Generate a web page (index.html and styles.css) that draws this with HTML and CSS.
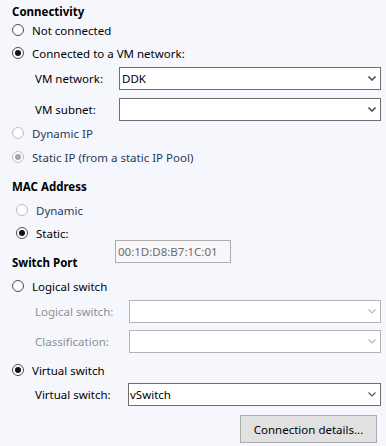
FILE: index.html
```html
<!DOCTYPE html>
<html lang="en">

<head>
    <meta charset="UTF-8">
    <meta name="viewport" content="width=device-width, initial-scale=1.0">
    <link rel="stylesheet" href="styles.css">
    <title>Network Adapter</title>
</head>

<body>
    <div class="panel">
        <!-- Connectivity -->
        <div class="heading heading-first">Connectivity</div>
        <div class="radio-row row-not-connected">
            <span class="radio"></span>
            <span class="radio-label">Not connected</span>
        </div>
        <div class="radio-row row-connected">
            <span class="radio checked"></span>
            <span class="radio-label">Connected to a VM network:</span>
        </div>
        <div class="field-row row-vm-network">
            <span class="field-label">VM network:</span>
            <div class="combo">
                <span class="combo-text">DDK</span>
                <svg class="chevron" width="8" height="5" viewBox="0 0 8 5"><path d="M0.5 0.5 L4 4 L7.5 0.5" fill="none" stroke="currentColor" stroke-width="1.6"/></svg>
            </div>
        </div>
        <div class="field-row row-vm-subnet">
            <span class="field-label">VM subnet:</span>
            <div class="combo">
                <span class="combo-text"></span>
                <svg class="chevron" width="8" height="5" viewBox="0 0 8 5"><path d="M0.5 0.5 L4 4 L7.5 0.5" fill="none" stroke="currentColor" stroke-width="1.6"/></svg>
            </div>
        </div>
        <div class="radio-row row-dynamic-ip">
            <span class="radio disabled"></span>
            <span class="radio-label muted">Dynamic IP</span>
        </div>
        <div class="radio-row row-static-ip">
            <span class="radio disabled checked"></span>
            <span class="radio-label muted">Static IP (from a static IP Pool)</span>
        </div>

        <!-- MAC Address -->
        <div class="heading heading-mac">MAC Address</div>
        <div class="radio-row mac-radio row-mac-dynamic">
            <span class="radio disabled"></span>
            <span class="radio-label muted">Dynamic</span>
        </div>
        <div class="radio-row mac-radio row-mac-static">
            <span class="radio checked"></span>
            <span class="radio-label">Static:</span>
        </div>
        <div class="mac-box">00:1D:D8:B7:1C:01</div>

        <!-- Switch Port -->
        <div class="heading heading-switch">Switch Port</div>
        <div class="radio-row row-logical">
            <span class="radio"></span>
            <span class="radio-label">Logical switch</span>
        </div>
        <div class="field-row switch-field row-logical-switch">
            <span class="field-label disabled-text">Logical switch:</span>
            <div class="combo disabled">
                <span class="combo-text"></span>
                <svg class="chevron" width="8" height="5" viewBox="0 0 8 5"><path d="M0.5 0.5 L4 4 L7.5 0.5" fill="none" stroke="currentColor" stroke-width="1.2"/></svg>
            </div>
        </div>
        <div class="field-row switch-field row-classification">
            <span class="field-label disabled-text">Classification:</span>
            <div class="combo disabled">
                <span class="combo-text"></span>
                <svg class="chevron" width="8" height="5" viewBox="0 0 8 5"><path d="M0.5 0.5 L4 4 L7.5 0.5" fill="none" stroke="currentColor" stroke-width="1.2"/></svg>
            </div>
        </div>
        <div class="radio-row row-virtual">
            <span class="radio checked"></span>
            <span class="radio-label">Virtual switch</span>
        </div>
        <div class="field-row switch-field row-virtual-switch">
            <span class="field-label">Virtual switch:</span>
            <div class="combo">
                <span class="combo-text tight">vSwitch</span>
                <svg class="chevron" width="8" height="5" viewBox="0 0 8 5"><path d="M0.5 0.5 L4 4 L7.5 0.5" fill="none" stroke="currentColor" stroke-width="1.2"/></svg>
            </div>
        </div>
        <div class="button-row">
            <button class="btn" type="button">Connection details...</button>
        </div>
    </div>
</body>

</html>
```

FILE: styles.css
```css
body {
  margin: 0;
  font-family: "Noto Sans", "Open Sans", sans-serif;
  font-size: 11.5px;
  color: #000;
  background-color: #f6f7fd;
}

.panel {
  padding: 0 5px 0 12px;
}

.heading {
  height: 16px;
  display: flex;
  align-items: center;
  font-weight: bold;
}

.heading-first {
  height: 22px;
}

.heading-mac {
  margin-top: 13px;
}

.heading-switch {
  margin-top: -9px;
}

/* radio rows */
.radio-row {
  height: 16px;
  display: flex;
  align-items: center;
}

.radio {
  box-sizing: border-box;
  width: 12px;
  height: 12px;
  border: 1px solid #4d4d4d;
  border-radius: 50%;
  background: #fff;
  display: flex;
  align-items: center;
  justify-content: center;
  margin-right: 8px;
}

.radio.checked::after {
  content: "";
  width: 6px;
  height: 6px;
  border-radius: 50%;
  background: #111;
}

.radio.disabled {
  border-color: #bcbcbc;
}

.radio.disabled.checked::after {
  background: #a6a6a6;
}

.radio-label.muted {
  color: #263a58;
}

.mac-radio {
  padding-left: 4px;
}

.row-connected { margin-top: 7px; }
.row-dynamic-ip { margin-top: 4px; }
.row-static-ip { margin-top: 8px; }
.row-mac-dynamic { margin-top: 8px; }
.row-mac-static { margin-top: 7px; }
.row-logical { margin-top: 8px; }
.row-virtual { margin-top: 9px; }

/* label + combo rows */
.field-row {
  display: flex;
  align-items: center;
  padding-left: 23px;
}

.field-label {
  width: 84px;
  flex-shrink: 0;
}

.switch-field .field-label {
  width: 93px;
}

.row-logical-switch .field-label,
.row-classification .field-label {
  width: 94px;
}

.disabled-text {
  color: #8f8f8f;
}

.combo {
  box-sizing: border-box;
  flex: 1;
  height: 23px;
  border: 1px solid #707070;
  background: #fff;
  display: flex;
  align-items: center;
  justify-content: space-between;
  padding: 0 4px 0 2px;
  color: #555;
}

.combo.disabled {
  border-color: #b4b4b4;
  color: #b8b8b8;
}

.combo-text {
  color: #000;
}

.combo-text.tight {
  margin-left: -1px;
}

.row-vm-network { margin-top: 6px; }
.row-vm-subnet { margin-top: 8px; }
.row-logical-switch { margin-top: 6px; }
.row-classification { margin-top: 7px; }
.row-virtual-switch { margin-top: 5px; }

.mac-box {
  box-sizing: border-box;
  width: 116px;
  height: 23px;
  margin: -1px 0 0 103px;
  border: 1px solid #adadad;
  background: #f8f6f8;
  color: #6d6d6d;
  display: flex;
  align-items: center;
  padding-left: 2px;
}

.button-row {
  display: flex;
  justify-content: flex-end;
  margin-top: 9px;
  padding-right: 4px;
}

.btn {
  box-sizing: border-box;
  width: 137px;
  height: 28px;
  border: 1px solid #adadad;
  background: #e1e1e1;
  font-family: inherit;
  font-size: 11.5px;
  color: #000;
  padding: 0;
}
```
